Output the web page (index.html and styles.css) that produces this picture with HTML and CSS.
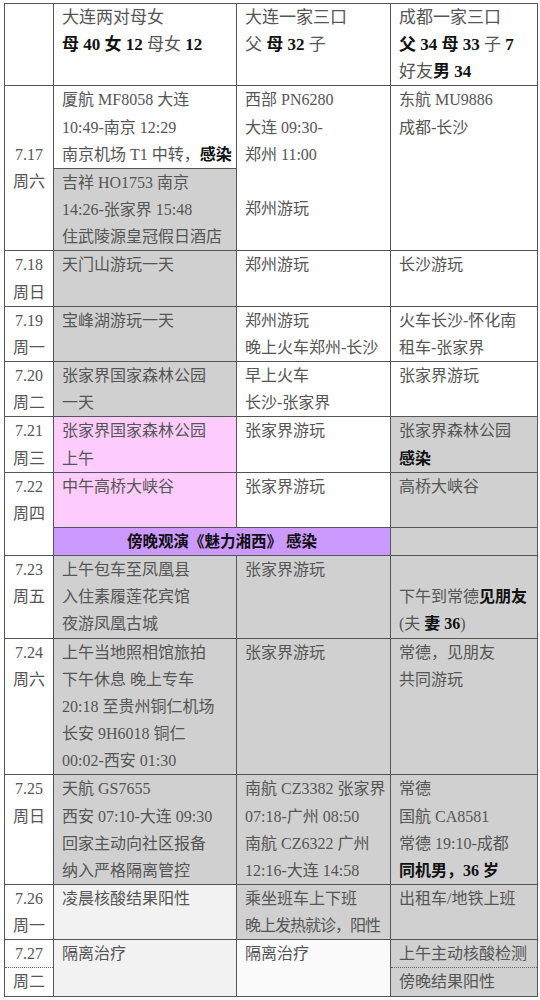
FILE: index.html
```html
<!DOCTYPE html>
<html lang="zh-CN">
<head>
<meta charset="utf-8">
<title>行程表</title>
<link rel="stylesheet" href="styles.css">
</head>
<body>
<table class="sched">
<colgroup><col class="c-date"><col class="c-a"><col class="c-b"><col class="c-c"></colgroup>
<tbody>
<tr class="head">
<td class="date"></td>
<td>大连两对母女<br><b>母 40 女 12</b> 母女 <b>12</b></td>
<td>大连一家三口<br>父 <b>母 32</b> 子</td>
<td>成都一家三口<br><b>父 34 母 33</b> 子 <b>7</b><br>好友<b>男 34</b></td>
</tr>
<tr>
<td class="date mid" rowspan="2">7.17<br>周六</td>
<td>厦航 MF8058 大连<br>10:49-南京 12:29<br>南京机场 T1 中转，<b>感染</b></td>
<td rowspan="2">西部 PN6280<br>大连 09:30-<br>郑州 11:00<br><br>郑州游玩</td>
<td rowspan="2">东航 MU9886<br>成都-长沙</td>
</tr>
<tr>
<td class="gray">吉祥 HO1753 南京<br>14:26-张家界 15:48<br>住武陵源皇冠假日酒店</td>
</tr>
<tr>
<td class="date">7.18<br>周日</td>
<td class="gray">天门山游玩一天</td>
<td>郑州游玩</td>
<td>长沙游玩</td>
</tr>
<tr>
<td class="date">7.19<br>周一</td>
<td class="gray">宝峰湖游玩一天</td>
<td>郑州游玩<br>晚上火车郑州-长沙</td>
<td>火车长沙-怀化南<br>租车-张家界</td>
</tr>
<tr>
<td class="date">7.20<br>周二</td>
<td class="gray">张家界国家森林公园<br>一天</td>
<td>早上火车<br>长沙-张家界</td>
<td>张家界游玩</td>
</tr>
<tr>
<td class="date">7.21<br>周三</td>
<td class="pink">张家界国家森林公园<br>上午</td>
<td>张家界游玩</td>
<td class="gray">张家界森林公园<br><b>感染</b></td>
</tr>
<tr class="two-line">
<td class="date" rowspan="2">7.22<br>周四</td>
<td class="pink">中午高桥大峡谷</td>
<td>张家界游玩</td>
<td class="gray">高桥大峡谷</td>
</tr>
<tr>
<td class="purple" colspan="2"><b>傍晚观演《魅力湘西》 感染</b></td>
<td class="gray"></td>
</tr>
<tr>
<td class="date">7.23<br>周五</td>
<td class="gray">上午包车至凤凰县<br>入住素履莲花宾馆<br>夜游凤凰古城</td>
<td class="gray">张家界游玩</td>
<td class="gray"><br>下午到常德<b>见朋友</b><br>(夫 <b>妻 36</b>)</td>
</tr>
<tr>
<td class="date">7.24<br>周六</td>
<td class="gray">上午当地照相馆旅拍<br>下午休息 晚上专车<br>20:18 至贵州铜仁机场<br>长安 9H6018 铜仁<br>00:02-西安 01:30</td>
<td class="gray">张家界游玩</td>
<td class="gray">常德，见朋友<br>共同游玩</td>
</tr>
<tr>
<td class="date">7.25<br>周日</td>
<td class="gray">天航 GS7655<br>西安 07:10-大连 09:30<br>回家主动向社区报备<br>纳入严格隔离管控</td>
<td class="gray">南航 CZ3382 张家界<br>07:18-广州 08:50<br>南航 CZ6322 广州<br>12:16-大连 14:58</td>
<td class="gray">常德<br>国航 CA8581<br>常德 19:10-成都<br><b>同机男，36 岁</b></td>
</tr>
<tr>
<td class="date">7.26<br>周一</td>
<td class="light">凌晨核酸结果阳性</td>
<td class="gray">乘坐班车上下班<br><span class="tight">晚上发热就诊，阳性</span></td>
<td class="gray">出租车/地铁上班</td>
</tr>
<tr>
<td class="date dotted">7.27</td>
<td class="light" rowspan="2">隔离治疗</td>
<td class="paler" rowspan="2">隔离治疗</td>
<td class="gray dotted">上午主动核酸检测</td>
</tr>
<tr>
<td class="date dotted-top">周二</td>
<td class="gray dotted-top">傍晚结果阳性</td>
</tr>
</tbody>
</table>
</body>
</html>
```

FILE: styles.css
```css
html, body {
  margin: 0;
  padding: 0;
  background: #ffffff;
}

body {
  padding: 3px 0 0 4px;
  font-family: "Liberation Serif", "Noto Sans CJK SC", serif;
  font-size: 16px;
  color: #555555;
}

.sched {
  border-collapse: collapse;
  table-layout: fixed;
  width: 533px;
}

.c-date { width: 49px; }
.c-a { width: 183px; }
.c-b { width: 154px; }
.c-c { width: 147px; }

.sched td {
  border: 1px solid #555555;
  padding: 0 0 0 8px;
  line-height: 27.15px;
  vertical-align: top;
  white-space: nowrap;
  background: #ffffff;
}

.sched .two-line td {
  height: 54.3px;
}

.head td {
  font-size: 17px;
}

.sched td.date {
  text-align: center;
  padding: 0;
}

.sched td.mid {
  vertical-align: middle;
}

.sched td.gray { background: #d0d0d0; }
.sched td.pink { background: #ffccff; }
.sched td.purple {
  background: #cc99ff;
  text-align: center;
  padding: 0;
  font-size: 15.5px;
}
.sched td.light { background: #f2f2f2; }
.sched td.paler { background: #fbfbfb; }

.sched td.dotted {
  border-bottom: 1px dotted #666666;
}

.sched td.dotted-top {
  border-top: 1px dotted #666666;
}

b {
  color: #111111;
  font-weight: bold;
}

.tight {
  letter-spacing: -1px;
}
```
